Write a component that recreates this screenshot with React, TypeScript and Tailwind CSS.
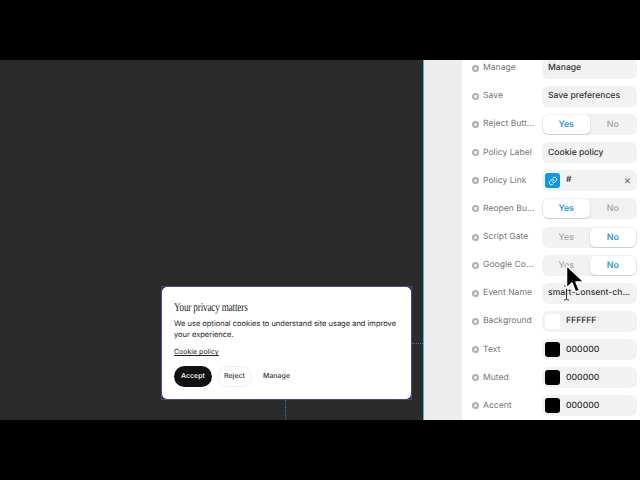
const inter = "font-['Inter','Liberation_Sans',sans-serif] [text-rendering:geometricPrecision]";

type Row =
  | { label: string; kind: "text"; value: string }
  | { label: string; kind: "toggle"; on: "Yes" | "No" }
  | { label: string; kind: "link"; value: string }
  | { label: string; kind: "color"; value: string; swatch: "white" | "black" };

const rows: Row[] = [
  { label: "Manage", kind: "text", value: "Manage" },
  { label: "Save", kind: "text", value: "Save preferences" },
  { label: "Reject Butt...", kind: "toggle", on: "Yes" },
  { label: "Policy Label", kind: "text", value: "Cookie policy" },
  { label: "Policy Link", kind: "link", value: "#" },
  { label: "Reopen Bu...", kind: "toggle", on: "Yes" },
  { label: "Script Gate", kind: "toggle", on: "No" },
  { label: "Google Co...", kind: "toggle", on: "No" },
  { label: "Event Name", kind: "text", value: "smart-consent-ch..." },
  { label: "Background", kind: "color", value: "FFFFFF", swatch: "white" },
  { label: "Text", kind: "color", value: "000000", swatch: "black" },
  { label: "Muted", kind: "color", value: "000000", swatch: "black" },
  { label: "Accent", kind: "color", value: "000000", swatch: "black" },
];

const Toggle = ({ on }: { on: "Yes" | "No" }) => (
  <div className="flex h-[21px] w-full rounded-[6px] bg-[#f2f2f2] p-[1px]">
    {(["Yes", "No"] as const).map((opt) => (
      <div
        key={opt}
        className={
          opt === on
            ? "flex h-full w-1/2 items-center justify-center rounded-[5px] bg-white text-[8.8px] leading-[13px] font-semibold text-[#2a98d6] shadow-[0_1px_2px_rgba(0,0,0,0.2)]"
            : "flex h-full w-1/2 items-center justify-center text-[8.8px] leading-[13px] font-medium text-[#a3a3a3]"
        }
      >
        {opt}
      </div>
    ))}
  </div>
);

const Control = ({ row }: { row: Row }) => {
  if (row.kind === "toggle") return <Toggle on={row.on} />;
  if (row.kind === "text") {
    return (
      <div className="flex h-[21px] w-full items-center whitespace-nowrap rounded-[6px] bg-[#f2f2f2] pl-[6px] pt-[1px] text-[8.6px] leading-[13px] font-medium text-[#333333]">
        {row.value}
      </div>
    );
  }
  if (row.kind === "link") {
    return (
      <div className="flex h-[21px] w-full items-center rounded-[6px] bg-[#f2f2f2] pl-[3px] pr-[6px] text-[8.6px] leading-[13px] font-medium text-[#333333]">
        <div className="flex h-[15px] w-[15px] items-center justify-center rounded-[3px] bg-[#0f96ee]">
          <svg width="10" height="10" viewBox="0 0 24 24" fill="none" stroke="white" strokeWidth="2.4" strokeLinecap="round">
            <path d="M10 14a5 5 0 0 0 7 0l3-3a5 5 0 0 0-7-7l-1 1" />
            <path d="M14 10a5 5 0 0 0-7 0l-3 3a5 5 0 0 0 7 7l1-1" />
          </svg>
        </div>
        <span className="ml-[6px] flex-1">{row.value}</span>
        <span className="text-[11px] leading-none text-[#777777]">×</span>
      </div>
    );
  }
  return (
    <div className="flex h-[21px] w-full items-center rounded-[6px] bg-[#f2f2f2] pl-[3px] text-[8.6px] leading-[13px] font-medium text-[#333333]">
      <div
        className={
          row.swatch === "white"
            ? "h-[15px] w-[15px] rounded-[3px] bg-white"
            : "h-[15px] w-[15px] rounded-[3px] bg-black"
        }
      />
      <span className="ml-[6px] pt-[1px]">{row.value}</span>
    </div>
  );
};

const Cursor = () => (
  <>
    <svg className="absolute left-[562px] top-[225px]" width="9" height="16" viewBox="0 0 9 16">
      <path d="M2 1h1.5L4.5 2 5.5 1H7M4.5 2v12M2 15h1.5L4.5 14l1 1H7" fill="none" stroke="#222222" strokeWidth="0.9" />
    </svg>
    <svg className="absolute left-[565px] top-[204px]" width="21" height="30" viewBox="0 0 21 30">
      <path d="M1.5 1.5 L1.5 24 L7 19 L10.5 28 L14.5 26.5 L11 18 L19 18 Z" fill="black" stroke="white" strokeWidth="1.5" strokeLinejoin="round" />
    </svg>
  </>
);

export default function App() {
  return (
    <div className={`flex h-[480px] w-[640px] flex-col overflow-hidden bg-black ${inter}`}>
      <div className="h-[60px] shrink-0" />
      <div className="relative flex h-[360px] shrink-0 overflow-hidden">
        <div className="relative w-[423px] shrink-0 bg-[#2b2b2b]">
          <div className="absolute left-[411px] top-[283px] w-[12px] border-t border-dotted border-[#2f7fa8]" />
          <div className="absolute left-[285px] top-[340px] h-[20px] border-l border-dotted border-[#2f7fa8]" />
          <div className="absolute left-[161px] top-[226px] h-[114px] w-[251px] border border-[#5b3f8c]">
            <div className="flex h-full w-full flex-col rounded-[5px] bg-white pl-[12px] pt-[13px]">
              <div className="origin-left scale-x-[0.76] whitespace-nowrap font-['Liberation_Serif',serif] text-[12px] leading-[14px] tracking-[-0.2px] text-[#222222]">
                Your privacy matters
              </div>
              <p className="mt-[4px] w-[225px] text-[7.5px] leading-[11px] text-[#222222]">
                We use optional cookies to understand site usage and improve your experience.
              </p>
              <div className="mt-[6px] text-[7px] leading-[11px] text-[#222222] underline">Cookie policy</div>
              <div className="mt-[9px] flex items-center gap-[5px] text-[7px] font-medium">
                <div className="flex h-[21px] w-[38px] items-center justify-center rounded-full bg-[#111111] text-white">Accept</div>
                <div className="flex h-[21px] w-[35px] items-center justify-center rounded-full border border-[#eeeeee] text-[#333333]">Reject</div>
                <div className="flex h-[21px] w-[39px] items-center justify-center text-[#333333]">Manage</div>
              </div>
            </div>
          </div>
        </div>
        <div className="w-[1px] shrink-0 bg-[#4db2e6]" />
        <div className="w-[38px] shrink-0 bg-[#ededed]" />
        <div className="flex-1 bg-white pl-[10px] pr-[3px]">
          <div className="-mt-[6px] flex flex-col">
            {rows.map((row) => (
              <div key={row.label} className="flex h-[28.17px] shrink-0 items-center">
                <div className="flex h-[7px] w-[7px] shrink-0 items-center justify-center rounded-full bg-[#b0b0b0]">
                  <div className="h-[3px] w-[3px] rounded-full bg-white" />
                </div>
                <div className="ml-[4px] w-[59px] shrink-0 whitespace-nowrap pt-[1px] text-[8.6px] leading-[13px] text-[#777777]">{row.label}</div>
                <div className="min-w-0 flex-1 overflow-hidden rounded-[6px]">
                  <Control row={row} />
                </div>
              </div>
            ))}
          </div>
        </div>
        <Cursor />
      </div>
      <div className="h-[60px] shrink-0" />
    </div>
  );
}
